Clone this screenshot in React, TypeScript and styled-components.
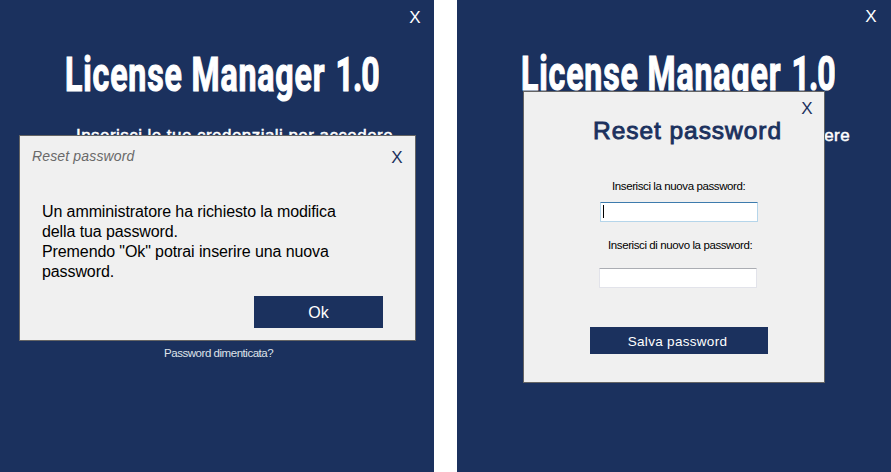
import React from "react";
import styled, { createGlobalStyle } from "styled-components";

const navy = "#1b315e";

const GlobalStyle = createGlobalStyle`
  * { box-sizing: border-box; }
  body { margin: 0; background: #fff; font-family: "Liberation Sans", Arial, sans-serif; }
  button { font-family: inherit; }
`;

const Page = styled.main`
  display: flex;
  gap: 23px;
  width: 891px;
  height: 472px;
  overflow: hidden;
`;

const Window = styled.section`
  position: relative;
  flex: none;
  width: 434px;
  height: 472px;
  background: ${navy};
  color: #fff;
  display: flex;
  flex-direction: column;
  overflow: hidden;
`;

const TitleBar = styled.header<{ $top: number; $right: number }>`
  display: flex;
  flex: none;
  justify-content: flex-end;
  height: 40px;
  padding: ${(p) => p.$top}px ${(p) => p.$right}px 0 0;
`;

const CloseButton = styled.button<{ $color: string }>`
  width: 12px;
  height: 18px;
  padding: 0;
  border: 0;
  background: none;
  color: ${(p) => p.$color};
  font-size: 17px;
  line-height: 18px;
`;

const Brand = styled.h1<{ $top: number; $left: number }>`
  flex: none;
  height: 70px;
  margin: ${(p) => p.$top}px 0 0 ${(p) => p.$left}px;
  width: max-content;
  font: 700 49px/70px Roboto, sans-serif;
  letter-spacing: 1.3px;
  white-space: nowrap;
  transform: scaleX(0.655);
  transform-origin: left center;
  -webkit-text-stroke: 1.2px #fff;
`;

const Version = styled.span`
  margin-left: 2px;
  letter-spacing: -1.5px;
`;

const Subtitle = styled.p<{ $top: number }>`
  flex: none;
  height: 20px;
  margin: ${(p) => p.$top}px 0 0 76px;
  font-size: 17px;
  line-height: 20px;
  letter-spacing: 0.45px;
  white-space: nowrap;
  -webkit-text-stroke: 0.5px #fff;
`;

const ForgotLink = styled.a`
  margin: 200px 0 0 164px;
  font-size: 11.5px;
  line-height: 14px;
  letter-spacing: -0.46px;
  white-space: nowrap;
  color: #dfe3ea;
`;

const Dialog = styled.div<{ $x: number; $y: number; $w: number; $h: number }>`
  position: absolute;
  left: ${(p) => p.$x}px;
  top: ${(p) => p.$y}px;
  width: ${(p) => p.$w}px;
  height: ${(p) => p.$h}px;
  display: flex;
  flex-direction: column;
  background: #f0f0f0;
  border: 1px solid #646464;
  color: #000;
`;

const DialogHeader = styled.div`
  display: flex;
  justify-content: space-between;
  height: 44px;
  padding: 13px 12px 0 12px;
`;

const DialogCaption = styled.span`
  font-size: 14px;
  font-style: italic;
  line-height: 15px;
  letter-spacing: 0.15px;
  color: #696969;
`;

const Message = styled.p`
  margin: 22px 0 0 22px;
  font-size: 16px;
  line-height: 20px;
  letter-spacing: -0.1px;
  white-space: nowrap;
`;

const ActionButton = styled.button<{ $w: number; $h: number; $size: number; $spacing?: number }>`
  width: ${(p) => p.$w}px;
  height: ${(p) => p.$h}px;
  padding: 1px ${(p) => (p.$spacing ? 3 : 0)}px 0 0;
  border: 0;
  background: ${navy};
  color: #fff;
  font-size: ${(p) => p.$size}px;
  letter-spacing: ${(p) => p.$spacing ?? 0}px;
`;

const MessageActions = styled.div`
  display: flex;
  justify-content: flex-end;
  margin: 14px 32px 0 0;
`;

const FormHeader = styled.div`
  display: flex;
  justify-content: flex-end;
  height: 24px;
  padding: 8px 11px 0 0;
`;

const FormTitle = styled.h2`
  margin: 0 0 0 69px;
  font-size: 24.5px;
  font-weight: 400;
  line-height: 30px;
  letter-spacing: 0.95px;
  white-space: nowrap;
  color: ${navy};
  -webkit-text-stroke: 0.9px ${navy};
`;

const Label = styled.label<{ $top: number; $left: number }>`
  margin: ${(p) => p.$top}px 0 0 ${(p) => p.$left}px;
  font-size: 11.5px;
  line-height: 14px;
  letter-spacing: -0.4px;
  white-space: nowrap;
`;

const Field = styled.div<{ $active?: boolean; $top: number; $left: number }>`
  display: flex;
  width: 158px;
  height: 20px;
  margin: ${(p) => p.$top}px 0 0 ${(p) => p.$left}px;
  padding: 2px;
  background: #fff;
  border: 1px solid ${(p) => (p.$active ? "#b5d5ea" : "#e2e3ea")};
  border-top-color: ${(p) => (p.$active ? "#3d7bad" : "#abadb3")};
  border-radius: 1px;
`;

const Caret = styled.span`
  width: 1px;
  height: 13px;
  background: #000;
`;

const FormActions = styled.div`
  display: flex;
  margin: 39px 0 0 66px;
`;

export default function App() {
  return (
    <>
      <GlobalStyle />
      <Page>
        <Window>
          <TitleBar $top={9} $right={13}>
            <CloseButton $color="#fff">X</CloseButton>
          </TitleBar>
          <Brand $top={0} $left={65}>
            License Manager <Version>1.0</Version>
          </Brand>
          <Subtitle $top={16}>Inserisci le tue credenziali per accedere</Subtitle>
          <ForgotLink>Password dimenticata?</ForgotLink>
          <Dialog $x={19} $y={135} $w={397} $h={206}>
            <DialogHeader>
              <DialogCaption>Reset password</DialogCaption>
              <CloseButton $color={navy}>X</CloseButton>
            </DialogHeader>
            <Message>
              Un amministratore ha richiesto la modifica
              <br />
              della tua password.
              <br />
              Premendo "Ok" potrai inserire una nuova
              <br />
              password.
            </Message>
            <MessageActions>
              <ActionButton $w={129} $h={32} $size={16}>Ok</ActionButton>
            </MessageActions>
          </Dialog>
        </Window>
        <Window>
          <TitleBar $top={8} $right={14}>
            <CloseButton $color="#fff">X</CloseButton>
          </TitleBar>
          <Brand $top={-1} $left={64}>
            License Manager <Version>1.0</Version>
          </Brand>
          <Subtitle $top={17}>Inserisci le tue credenziali per accedere</Subtitle>
          <Dialog $x={66} $y={91} $w={302} $h={292}>
            <FormHeader>
              <CloseButton $color={navy}>X</CloseButton>
            </FormHeader>
            <FormTitle>Reset password</FormTitle>
            <Label $top={33} $left={88}>Inserisci la nuova password:</Label>
            <Field $active $top={9} $left={76}>
              <Caret />
            </Field>
            <Label $top={16} $left={84}>Inserisci di nuovo la password:</Label>
            <Field $top={16} $left={75} />
            <FormActions>
              <ActionButton $w={178} $h={27} $size={13.5} $spacing={0.3}>Salva password</ActionButton>
            </FormActions>
          </Dialog>
        </Window>
      </Page>
    </>
  );
}
